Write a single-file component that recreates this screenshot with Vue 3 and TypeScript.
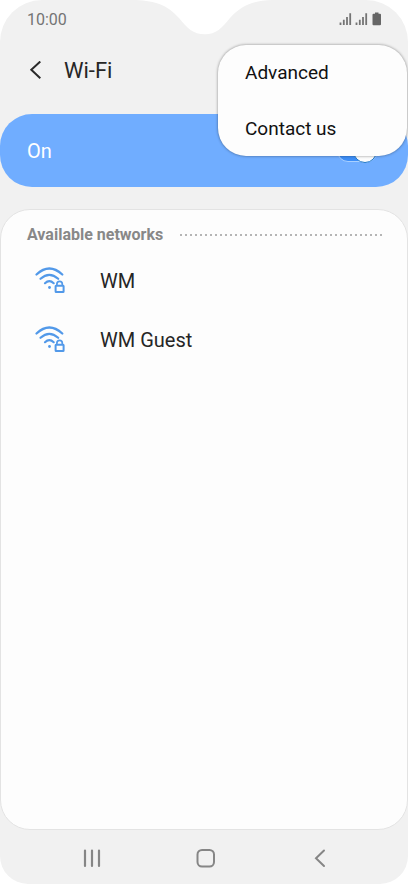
<script setup lang="ts">
import { ref } from 'vue'

interface Network {
  id: number
  name: string
}

const enabled = ref(true)
const networks: Network[] = [
  { id: 1, name: 'WM' },
  { id: 2, name: 'WM Guest' },
]
const menuItems: string[] = ['Advanced', 'Contact us']
</script>

<template>
  <div class="screen">
    <svg class="notch" width="136" height="36" viewBox="0 0 136 36" aria-hidden="true">
      <path d="M0 0H136C116 1 106 5 94 18C86 28 80 34.300 69 34.300C57 34.300 51 28 43 18C31 5 20 1 0 0Z" fill="#fff" />
    </svg>

    <div class="status">
      <span>10:00</span>
      <svg width="44" height="16" viewBox="0 0 44 16" aria-hidden="true">
        <g stroke="#747474" stroke-width="1.800" fill="none">
          <path d="M1.500 10.500V13M4.800 7.800V13M8 5V13M11.200 1.300V13" />
          <path d="M17.500 10.500V13M20.800 7.800V13M24 5V13M27.200 1.300V13" />
        </g>
        <path d="M36 0.500h3.500v1.200h1.500q1 0 1 1V12.200q0 1-1 1h-6.500q-1 0-1-1V2.700q0-1 1-1h1.500Z" fill="#666" />
      </svg>
    </div>

    <header class="header">
      <button class="back" type="button" aria-label="Back">
        <svg width="16" height="20" viewBox="0 0 16 20" aria-hidden="true">
          <path d="M12.300 0.500L3.300 8.800L12.300 17.300" fill="none" stroke="#2a2a2a" stroke-width="2" />
        </svg>
      </button>
      <h1>Wi-Fi</h1>
      <nav class="menu">
        <button v-for="item in menuItems" :key="item" type="button">{{ item }}</button>
      </nav>
    </header>

    <label class="power">
      <span>On</span>
      <input v-model="enabled" class="switch" type="checkbox" role="switch" />
    </label>

    <main class="card">
      <div class="section">
        <h2>Available networks</h2>
        <span class="dots"></span>
      </div>
      <ul>
        <li v-for="network in networks" :key="network.id">
          <button class="network" type="button">
            <svg width="32" height="30" viewBox="0 0 32 30" aria-hidden="true">
              <g fill="none" stroke="#5299e9" stroke-width="2.200" stroke-linecap="round">
                <path d="M3.500 8.500Q16.300 -3.500 29.300 8.500" />
                <path d="M7.500 12.800Q16.300 4.800 25.200 12.800" />
                <path d="M12 17.200Q16.300 13.200 20.700 17.200" />
              </g>
              <circle cx="16.500" cy="21.500" r="1.400" fill="#5299e9" />
              <g fill="none" stroke="#5299e9" stroke-width="2">
                <rect x="22.600" y="19.800" width="8" height="6.300" rx="0.500" />
                <path d="M23.900 19.500V18a2.700 2.700 0 0 1 5.400 0V19.500" stroke-width="1.700" />
              </g>
            </svg>
            <span>{{ network.name }}</span>
          </button>
        </li>
      </ul>
    </main>

    <footer class="navbar">
      <button type="button" aria-label="Recent apps">
        <svg width="24" height="24" viewBox="0 0 24 24" aria-hidden="true">
          <path d="M5 4.500V20M12 4.500V20M19 4.500V20" fill="none" stroke="#868686" stroke-width="2.200" stroke-linecap="round" />
        </svg>
      </button>
      <button type="button" aria-label="Home">
        <svg width="24" height="24" viewBox="0 0 24 24" aria-hidden="true">
          <rect x="3.500" y="4" width="16.500" height="16.500" rx="4.500" fill="none" stroke="#868686" stroke-width="2" />
        </svg>
      </button>
      <button type="button" aria-label="Back">
        <svg width="24" height="24" viewBox="0 0 24 24" aria-hidden="true">
          <path d="M16 4.500L8 12.200L16 20" fill="none" stroke="#868686" stroke-width="2" stroke-linecap="round" />
        </svg>
      </button>
    </footer>
  </div>
</template>

<style>
body {
  margin: 0;
  background: #fff;
}
</style>

<style scoped>
.screen {
  position: relative;
  box-sizing: border-box;
  display: flex;
  flex-direction: column;
  min-height: 100vh;
  overflow: hidden;
  border-radius: 42px 42px 28px 28px;
  background: #f1f1f1;
  color: #262626;
  font-family: Roboto, "Liberation Sans", sans-serif;
  font-size: 20px;
  line-height: 24px;
}

button {
  padding: 0;
  border: 0;
  background: none;
  color: inherit;
  font: inherit;
  cursor: pointer;
}

svg {
  display: block;
  flex: none;
}

h1,
h2,
ul {
  margin: 0;
  padding: 0;
}

.notch {
  position: absolute;
  top: 0;
  left: 50%;
  transform: translateX(-50%);
}

.status {
  display: flex;
  align-items: center;
  justify-content: space-between;
  height: 40px;
  padding: 0 25px 0 27px;
  color: #747474;
  font-size: 16px;
}

.header {
  position: relative;
  display: flex;
  align-items: center;
  gap: 20px;
  height: 62px;
  padding: 0 28px;
  margin-bottom: 12px;
}

.header h1 {
  font-size: 22px;
  font-weight: 400;
}

.menu {
  position: absolute;
  z-index: 1;
  top: 5px;
  right: 1px;
  box-sizing: border-box;
  display: flex;
  flex-direction: column;
  gap: 2px;
  width: 189px;
  padding-top: 1px;
  border-radius: 28px;
  background: #fdfdfd;
  box-shadow: 0 0 3px rgba(0, 0, 0, 0.45);
  color: #111;
  font-size: 19px;
}

.menu button {
  height: 54px;
  padding: 0 27px;
  text-align: left;
}

.power {
  display: flex;
  align-items: center;
  justify-content: space-between;
  height: 73px;
  padding: 0 30px 0 27px;
  border-radius: 32px;
  background: #70adff;
  color: #fff;
}

.switch {
  appearance: none;
  display: flex;
  align-items: center;
  justify-content: flex-end;
  box-sizing: border-box;
  width: 41px;
  height: 22px;
  margin: 0;
  border: 1px solid #a9d0ff;
  border-radius: 11px;
  background: #3d8ef7;
}

.switch::before {
  content: "";
  box-sizing: border-box;
  flex: none;
  width: 24px;
  height: 24px;
  border: 1px solid #2179c8;
  border-radius: 50%;
  background: #fdfdfd;
}

.switch:not(:checked) {
  justify-content: flex-start;
}

.card {
  flex: 1;
  margin-top: 22px;
  padding: 13px 0;
  border: 1px solid #e3e3e3;
  border-radius: 30px;
  background: #fdfdfd;
}

.section {
  display: flex;
  align-items: center;
  gap: 17px;
  padding: 0 24px 0 26px;
}

.section h2 {
  color: #888;
  font-size: 16px;
  font-weight: 700;
}

.dots {
  flex: 1;
  height: 2px;
  background: repeating-linear-gradient(90deg, #b5b5b5 0 2px, transparent 2px 5px);
}

ul {
  padding-top: 4px;
  list-style: none;
}

.network {
  display: flex;
  align-items: center;
  gap: 35px;
  width: 100%;
  height: 59px;
  padding: 0 32px;
  text-align: left;
}

.navbar {
  display: flex;
  align-items: center;
  justify-content: space-between;
  height: 54px;
  padding: 2px 76px 0 80px;
  box-sizing: border-box;
}
</style>
